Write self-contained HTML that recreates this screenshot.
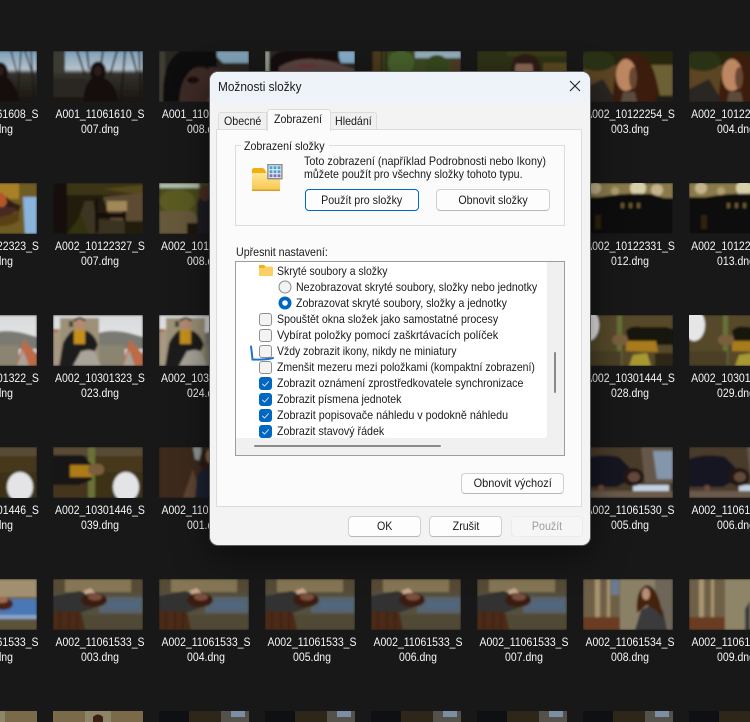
<!DOCTYPE html>
<html><head><meta charset="utf-8"><title>Možnosti složky</title>
<style>
html,body{margin:0;padding:0;background:#181818;width:750px;height:722px;overflow:hidden}
body{position:relative;font-family:"Liberation Sans",sans-serif}
#bg{position:absolute;left:0;top:0;display:block}
#bg text{font:12px "Liberation Sans",sans-serif;fill:#f4f6f8;text-anchor:middle;transform-box:fill-box;transform-origin:center;transform:scaleX(.875)}
.a{position:absolute;box-sizing:border-box}
.t{position:absolute;white-space:nowrap;font-size:12px;line-height:16px;color:#1a1a1a;transform-origin:left center;transform:scaleX(.888)}
.b{position:absolute;box-sizing:border-box;background:#fdfdfd;border:1px solid #d0d0d0;border-bottom-color:#b8b8b8;border-radius:4px;text-align:center;font-size:12px;color:#1a1a1a}
.b span{display:inline-block;transform:scaleX(.888)}
.c{position:absolute;left:259px;width:13px;height:13px;box-sizing:border-box;border:1px solid #8f8f8f;border-radius:3px;background:#f3f3f3}
.k{position:absolute;left:259px;width:13px;height:13px;border-radius:3px;background:#0067c0}
.k svg{position:absolute;left:0;top:0}
</style></head><body>
<svg id="bg" width="750" height="722" viewBox="0 0 750 722" xmlns="http://www.w3.org/2000/svg">
<defs>
<filter id="f" x="-5%" y="-5%" width="110%" height="110%"><feGaussianBlur stdDeviation="1"/></filter>
<linearGradient id="sky" x1="0" y1="0" x2="0" y2="1"><stop offset="0" stop-color="#7f9fba"/><stop offset=".36" stop-color="#b4c2cc"/><stop offset=".44" stop-color="#33322c"/><stop offset="1" stop-color="#1a140e"/></linearGradient>
<linearGradient id="grey" x1="0" y1="0" x2="0" y2="1"><stop offset="0" stop-color="#d8dadc"/><stop offset="1" stop-color="#eeeeee"/></linearGradient>
<symbol id="sil" viewBox="0 0 90 51"><g filter="url(#f)"><rect width="90" height="51" fill="url(#sky)"/><path d="M0 0h12v22H0z" fill="#3a3a32"/><path d="M0 28h32v18H0z" fill="#2a2620"/><path d="M24 0l8 24M64 0l-7 24M72 0l-4 51M86 0l2 51M50 0l-2 14M78 0l6 22M34 0l2 18" stroke="#15120e" stroke-width="1.6" fill="none"/><path d="M30 51q2-20 9-24a8 10 0 1 1 12 0q11 4 14 24z" fill="#141010"/><ellipse cx="45" cy="20" rx="4" ry="5" fill="#2a1e18"/></g></symbol>
<symbol id="sil0" viewBox="0 0 90 51"><g filter="url(#f)"><rect width="90" height="51" fill="url(#sky)"/><path d="M74 0l-4 51M84 0l3 51M64 0l6 22M78 0l8 24" stroke="#15120e" stroke-width="1.3" fill="none"/><path d="M34 51q2-20 12-25a8 10 0 1 1 14 0q8 6 13 25z" fill="#141010"/><ellipse cx="53" cy="20" rx="4" ry="5" fill="#2a1e18"/></g></symbol>
<symbol id="face" viewBox="0 0 90 51"><g filter="url(#f)"><rect width="90" height="51" fill="#2a2722"/><path d="M0 0h6v51H0z" fill="#403e32"/><path d="M52 0h38v12H64z" fill="#7f9fb4"/><path d="M4 51Q2 10 22 0h36v16H40Q26 22 22 51z" fill="#0f0c0c"/><path d="M20 51Q22 22 38 16q26 0 52 8v27z" fill="#3e2c28"/><ellipse cx="34" cy="29" rx="6" ry="3.5" fill="#120d0d"/><path d="M36 16q8-2 14 2" stroke="#1a1010" stroke-width="2" fill="none"/><path d="M52 42q18-8 38-6v15H48z" fill="#6a4238"/></g></symbol>
<symbol id="face2" viewBox="0 0 90 51"><g filter="url(#f)"><rect width="90" height="51" fill="#2a2722"/><rect width="4" height="51" fill="#9aa090"/><path d="M72 0h18v12H76z" fill="#84acc8"/><path d="M4 51V10Q10 0 22 0h52v10H30z" fill="#121010"/><path d="M14 51V16q20-12 50-6l26 8v33z" fill="#5a4440"/><path d="M30 8q12-3 22 0" stroke="#1a1010" stroke-width="2" fill="none"/><path d="M34 14q10 3 16-1" stroke="#6a3034" stroke-width="3" fill="none"/></g></symbol>
<symbol id="green" viewBox="0 0 90 51"><g filter="url(#f)"><rect width="90" height="51" fill="#3c4a22"/><path d="M44 0h46v7H44z" fill="#94aebc"/><path d="M0 0h10v21H0z" fill="#4a3a1c"/><path d="M1 0v21M11 0v21M15 0v21" stroke="#2a1c0c" stroke-width="2"/><circle cx="30" cy="12" r="13" fill="#46602a"/><circle cx="66" cy="16" r="12" fill="#36481f"/><path d="M80 8h10v13H80z" fill="#4e3a26"/></g></symbol>
<symbol id="wood" viewBox="0 0 90 51"><g filter="url(#f)"><rect width="90" height="51" fill="#2e3014"/><path d="M30 0h60v5H30z" fill="#3a3c16"/><path d="M66 12h24v10H66z" fill="#5a4c24"/><path d="M34 21q0-16 12-18 12-1 16 8l2 10z" fill="#2e1c14"/><ellipse cx="47" cy="18" rx="9" ry="10" fill="#8e6a56"/><path d="M38 10q8-6 18 0l-2 3H40z" fill="#2e1c14"/></g></symbol>
<symbol id="sun" viewBox="0 0 90 51"><g filter="url(#f)"><rect width="90" height="51" fill="#5c4423"/><path d="M0 0h90v14H0z" fill="#26280f"/><ellipse cx="14" cy="10" rx="18" ry="10" fill="#2a3014"/><path d="M66 14h24v30H66z" fill="#6c6036"/><path d="M0 51V38l20-10 14 23z" fill="#2c2622"/><path d="M30 51Q30 8 48 2q18 0 24 22 4 14 6 27z" fill="#3a1c0e"/><ellipse cx="43" cy="24" rx="10" ry="16" fill="#bd8762"/><ellipse cx="50" cy="27" rx="4" ry="11" fill="#6a4630"/><path d="M38 51l2-10h12l2 10z" fill="#5c4c3c"/><path d="M74 51h16v-6H72z" fill="#1a1a18"/></g></symbol>
<symbol id="oh" viewBox="0 0 90 51"><g filter="url(#f)"><rect width="90" height="51" fill="#6e5c22"/><path d="M40 0h32v16H44z" fill="#a88028"/><path d="M76 14h14v37H78z" fill="#8bb4dc"/><path d="M40 40q14-10 32-12l2-6q-10-2-14-8-14 6-20 12z" fill="#2e1e14"/><path d="M44 12q14-8 16 8-8 12-18 6z" fill="#b4562a"/><path d="M40 26q14-4 30-1-8 14-30 12z" fill="#4a2c20"/><path d="M40 34q16 2 32-6v10q-14 8-32 4z" fill="#5a4018"/></g></symbol>
<symbol id="bench" viewBox="0 0 90 51"><g filter="url(#f)"><rect width="90" height="51" fill="#241e0e"/><path d="M13 0h77v12H13z" fill="#3a3412"/><path d="M50 6l40-4v10z" fill="#54481a"/><path d="M50 14l40-4v28H58z" fill="#5c4c30"/><path d="M20 51L32 18h8l6 33z" fill="#3e3620"/><rect width="14" height="51" fill="#17100a"/><path d="M54 18h20v10H54z" fill="#a08858"/><path d="M42 16l3 0v34h-3zM70 28h3v22h-3zM43 30h30v5H43z" fill="#17100a"/><path d="M14 51h22L28 32z" fill="#33320f"/><path d="M46 36l26 2v13H46z" fill="#3a3020"/></g></symbol>
<symbol id="forest" viewBox="0 0 90 51"><g filter="url(#f)"><rect width="90" height="51" fill="#4a4a1e"/><rect width="40" height="5" fill="#b0bca8"/><ellipse cx="18" cy="18" rx="18" ry="12" fill="#5a5a20"/><path d="M0 28h34l14 23H0z" fill="#66593a"/><path d="M28 40h12v11H28z" fill="#1e1710"/><path d="M38 51V22q4-18 14-20v49z" fill="#1c1f22"/><ellipse cx="46" cy="10" rx="6" ry="8" fill="#4a2e22"/></g></symbol>
<symbol id="dark" viewBox="0 0 90 51"><g filter="url(#f)"><rect width="90" height="51" fill="#0e0c09"/><path d="M0 0h90v15L0 14z" fill="#8a7a4c"/><circle cx="55" cy="5" r="8" fill="#d8d0aa"/><circle cx="74" cy="7" r="6" fill="#c4b48c"/><circle cx="12" cy="5" r="6" fill="#c4b48c"/><circle cx="32" cy="8" r="4" fill="#b0a070"/><path d="M4 17q30-8 65-6l21 7v33H0V18z" fill="#0f0d0a"/><path d="M38 20h3v5h-3zM46 20h3v5h-3zM54 20h3v5h-3z" fill="#6a5a30"/><path d="M12 32h6v14h-6z" fill="#2e2010"/></g></symbol>
<symbol id="castle" viewBox="0 0 90 51"><g filter="url(#f)"><rect width="90" height="51" fill="url(#grey)"/><path d="M46 18q12-4 30 0l14 4v12H46z" fill="#7a7a72"/><path d="M46 51V30h26v21z" fill="#8a8470"/><path d="M69 51l8-26 13 14v12z" fill="#bc6a46"/><path d="M70 51l6-16 6 16z" fill="#a8a49a"/><path d="M7 3h39v48H7z" fill="#9c9178"/><path d="M0 14h7v37H0z" fill="#a89882"/><path d="M0 14h5v3H0z" fill="#b06a4a"/><rect x="16" y="6" width="4" height="6" fill="#4a4030"/><path d="M6 51L10 28Q15 18 22 14L34 16Q42 20 45 30L42 36L28 36L20 51z" fill="#1c1b1e"/><path d="M20 51l8-14q8-4 14 0l6 14z" fill="#a8a49a"/><rect x="21" y="14" width="11" height="15" fill="#c4901a"/><ellipse cx="27" cy="9" rx="5" ry="6" fill="#b48a70"/><path d="M21 6q6-6 11 0" stroke="#3a2818" stroke-width="2" fill="none"/></g></symbol>
<symbol id="rot" viewBox="0 0 90 51"><g filter="url(#f)"><rect width="90" height="51" fill="#3e3018"/><rect width="90" height="9" fill="#5a4c34"/><path d="M42 9h48v16H42z" fill="#46381e"/><ellipse cx="73" cy="40" rx="13" ry="15" fill="#e4e4e6"/><rect x="35" y="0" width="7" height="51" fill="#6a7238"/><path d="M0 8h30l9 10v15l-14 5H0z" fill="#141216"/><path d="M17 18h22v12H17z" fill="#ad7c16"/><rect x="35" y="17" width="16" height="11" rx="5" fill="#7a5e3e"/><path d="M0 38h34v13H0z" fill="#44361e"/></g></symbol>
<symbol id="rot2" viewBox="0 0 90 51"><g filter="url(#f)"><rect width="90" height="51" fill="#56482a"/><ellipse cx="5" cy="10" rx="11" ry="16" fill="#e6e6e6"/><rect x="34" y="0" width="5" height="51" fill="#687038"/><path d="M43 16q4-6 16-4l24 0 7 2v16H60l-14-2z" fill="#151210"/><path d="M43 26h30l2 11-32-1z" fill="#a87c1a"/><rect x="29" y="20" width="16" height="10" rx="5" fill="#7a5e3e"/><path d="M50 40l14-2 4 13H46z" fill="#a89830"/><path d="M0 36h38v15H0z" fill="#4c4028"/><path d="M72 38h18v13H72z" fill="#2e2618"/></g></symbol>
<symbol id="brown" viewBox="0 0 90 51"><g filter="url(#f)"><rect width="90" height="51" fill="#3c2b1d"/><path d="M24 51L34 22l8 29z" fill="#5e4432"/><path d="M34 0h8v14l-6-2z" fill="#909a94"/><path d="M36 51l2-20 6-12h12l2 32z" fill="#1a2230"/><path d="M40 18q0-16 10-16 8 4 8 14-10 12-18 2z" fill="#2e1a12"/><ellipse cx="51" cy="9" rx="4" ry="7" fill="#8e6a50"/></g></symbol>
<symbol id="rdark" viewBox="0 0 90 51"><g filter="url(#f)"><rect width="90" height="51" fill="#4a3a2a"/><path d="M58 0h32v36H62z" fill="#66584a"/><path d="M70 4h20v28H74z" fill="#8496ac"/><path d="M50 38h36v6H50z" fill="#c4d2e0"/><path d="M0 12q16-6 36-2l10 10 2 12-14 8H0z" fill="#171820"/><ellipse cx="50" cy="30" rx="11" ry="9" fill="#241612"/><ellipse cx="51" cy="30" rx="6" ry="5" fill="#64483a"/><path d="M0 44h90v7H0z" fill="#6a5a4c"/><circle cx="18" cy="41" r="3" fill="#6e4c3c"/></g></symbol>
<symbol id="lie" viewBox="0 0 90 51"><g filter="url(#f)"><rect width="90" height="51" fill="#55503e"/><rect width="90" height="13" fill="#857654"/><path d="M0 0h12v13H0zM78 0h12v13H78z" fill="#574c34"/><path d="M46 18h44v16H46z" fill="#566470"/><path d="M56 24l30 0v5H56z" fill="#506884"/><path d="M28 36h62v15H28z" fill="#504a34"/><path d="M0 32h28l4 19H0z" fill="#4c2a18"/><path d="M7 32v19M16 32v19M24 32v19" stroke="#2a1a10"/><path d="M0 17l26-5 14 4 4 12-14 5-30-1z" fill="#323232"/><path d="M30 12l8-3 4 5-8 3z" fill="#c8a88c"/><ellipse cx="41" cy="21" rx="13" ry="7" fill="#3a1c10"/><ellipse cx="42" cy="18" rx="7" ry="3.5" fill="#7a5040"/></g></symbol>
<symbol id="lie0" viewBox="0 0 90 51"><g filter="url(#f)"><rect width="90" height="51" fill="#6a6048"/><rect width="90" height="18" fill="#a09070"/><path d="M40 20h50v20H40z" fill="#4a78b4"/><path d="M46 36h44v4H46z" fill="#8aa4c8"/><path d="M40 40h50v11H40z" fill="#5c523a"/><ellipse cx="56" cy="25" rx="10" ry="6" fill="#4a2012"/><ellipse cx="55" cy="21" rx="6" ry="3" fill="#a06a50"/></g></symbol>
<symbol id="tree" viewBox="0 0 90 51"><g filter="url(#f)"><rect width="90" height="51" fill="#8a8066"/><path d="M0 0h37v38H0z" fill="#6e5e46"/><path d="M12 0h5v38h-5zM24 0h3v38h-3z" fill="#a8946e"/><path d="M28 0h8v16h-8z" fill="#6a7c90"/><path d="M0 38h37v13H0z" fill="#6a3e20"/><path d="M72 0h18v51H72z" fill="#6e6656"/><path d="M52 51l6-20 10-5 12 5 4 20z" fill="#3a3a3c"/><path d="M54 34q-2-24 10-28 12 2 16 34l-6-8-10-6z" fill="#45220f"/><ellipse cx="63" cy="15" rx="4" ry="6" fill="#b88e74"/></g></symbol>
<symbol id="tree2" viewBox="0 0 90 51"><g filter="url(#f)"><rect width="90" height="51" fill="#6a5a40"/><path d="M0 0h36v38H0z" fill="#6e5e46"/><path d="M10 0h5v38h-5zM22 0h3v38h-3z" fill="#a89470"/><path d="M0 38h36v13H0z" fill="#6a3e20"/><rect x="36" width="34" height="51" fill="#8e8468"/><path d="M56 51V30l5-8v29z" fill="#3a3a3c"/></g></symbol>
<symbol id="d6" viewBox="0 0 90 11"><rect width="90" height="11" fill="#2e2618"/><path d="M0 0h30v11H0z" fill="#0f1014"/><path d="M62 0h28v11H62z" fill="#54504a"/><path d="M72 0h14v6H72z" fill="#7c8ea4"/></symbol>
<symbol id="t6" viewBox="0 0 90 11"><rect width="90" height="11" fill="#7a6a4a"/><rect x="32" width="26" height="11" fill="#8e8468"/><path d="M40 6q5-5 10 0v5H40z" fill="#3a2010"/></symbol>
</defs>

<use href="#sil0" x="-53" y="51" width="90" height="51"/><use href="#sil" x="53" y="51" width="90" height="51"/><use href="#face" x="159" y="51" width="90" height="51"/><use href="#face2" x="265" y="51" width="90" height="51"/><use href="#green" x="371" y="51" width="90" height="51"/><use href="#wood" x="477" y="51" width="90" height="51"/><use href="#sun" x="583" y="51" width="90" height="51"/><use href="#sun" x="689" y="51" width="90" height="51"/>
<use href="#oh" x="-53" y="183" width="90" height="51"/><use href="#bench" x="53" y="183" width="90" height="51"/><use href="#forest" x="159" y="183" width="90" height="51"/><use href="#dark" x="583" y="183" width="90" height="51"/><use href="#dark" x="689" y="183" width="90" height="51"/>
<use href="#castle" x="-53" y="315" width="90" height="51"/><use href="#castle" x="53" y="315" width="90" height="51"/><use href="#castle" x="159" y="315" width="90" height="51"/><use href="#rot2" x="583" y="315" width="90" height="51"/><use href="#rot2" x="689" y="315" width="90" height="51"/>
<use href="#rot" x="-53" y="447" width="90" height="51"/><use href="#rot" x="53" y="447" width="90" height="51"/><use href="#brown" x="159" y="447" width="90" height="51"/><use href="#rdark" x="583" y="447" width="90" height="51"/><use href="#rdark" x="689" y="447" width="90" height="51"/>
<use href="#lie0" x="-53" y="579" width="90" height="51"/><use href="#lie" x="53" y="579" width="90" height="51"/><use href="#lie" x="159" y="579" width="90" height="51"/><use href="#lie" x="265" y="579" width="90" height="51"/><use href="#lie" x="371" y="579" width="90" height="51"/><use href="#lie" x="477" y="579" width="90" height="51"/><use href="#tree" x="583" y="579" width="90" height="51"/><use href="#tree2" x="689" y="579" width="90" height="51"/>
<use href="#t6" x="-53" y="711" width="90" height="11"/><use href="#t6" x="53" y="711" width="90" height="11"/><use href="#d6" x="159" y="711" width="90" height="11"/><use href="#d6" x="265" y="711" width="90" height="11"/><use href="#d6" x="371" y="711" width="90" height="11"/><use href="#d6" x="477" y="711" width="90" height="11"/><use href="#d6" x="583" y="711" width="90" height="11"/><use href="#d6" x="689" y="711" width="90" height="11"/>

<text x="-6" y="118">A001_11061608_S</text><text x="-6" y="133">006.dng</text>
<text x="100" y="118">A001_11061610_S</text><text x="100" y="133">007.dng</text>
<text x="206" y="118">A001_11061611_S</text><text x="206" y="133">008.dng</text>
<text x="630" y="118">A002_10122254_S</text><text x="630" y="133">003.dng</text>
<text x="736" y="118">A002_10122255_S</text><text x="736" y="133">004.dng</text>
<text x="-6" y="250">A002_10122323_S</text><text x="-6" y="265">006.dng</text>
<text x="100" y="250">A002_10122327_S</text><text x="100" y="265">007.dng</text>
<text x="206" y="250">A002_10122328_S</text><text x="206" y="265">008.dng</text>
<text x="630" y="250">A002_10122331_S</text><text x="630" y="265">012.dng</text>
<text x="736" y="250">A002_10122331_S</text><text x="736" y="265">013.dng</text>
<text x="-6" y="382">A002_10301322_S</text><text x="-6" y="397">022.dng</text>
<text x="100" y="382">A002_10301323_S</text><text x="100" y="397">023.dng</text>
<text x="206" y="382">A002_10301323_S</text><text x="206" y="397">024.dng</text>
<text x="630" y="382">A002_10301444_S</text><text x="630" y="397">028.dng</text>
<text x="736" y="382">A002_10301444_S</text><text x="736" y="397">029.dng</text>
<text x="-6" y="514">A002_10301446_S</text><text x="-6" y="529">038.dng</text>
<text x="100" y="514">A002_10301446_S</text><text x="100" y="529">039.dng</text>
<text x="206" y="514">A002_11061500_S</text><text x="206" y="529">001.dng</text>
<text x="630" y="514">A002_11061530_S</text><text x="630" y="529">005.dng</text>
<text x="736" y="514">A002_11061530_S</text><text x="736" y="529">006.dng</text>
<text x="-6" y="646">A002_11061533_S</text><text x="-6" y="661">002.dng</text>
<text x="100" y="646">A002_11061533_S</text><text x="100" y="661">003.dng</text>
<text x="206" y="646">A002_11061533_S</text><text x="206" y="661">004.dng</text>
<text x="312" y="646">A002_11061533_S</text><text x="312" y="661">005.dng</text>
<text x="418" y="646">A002_11061533_S</text><text x="418" y="661">006.dng</text>
<text x="524" y="646">A002_11061533_S</text><text x="524" y="661">007.dng</text>
<text x="630" y="646">A002_11061534_S</text><text x="630" y="661">008.dng</text>
<text x="736" y="646">A002_11061534_S</text><text x="736" y="661">009.dng</text>
</svg>

<!-- dialog -->
<div class="a" style="left:210px;top:72px;width:380px;height:473px;background:#f3f3f3;border-radius:8px;box-shadow:0 0 0 1px #5c5c5c,0 10px 34px rgba(0,0,0,.55)"></div>
<div class="a" style="left:210px;top:72px;width:380px;height:30px;background:#eef2f9;border-radius:8px 8px 0 0"></div>
<div class="t" style="left:218px;top:79px;font-size:13px;transform:scaleX(.91)">Možnosti složky</div>
<svg class="a" style="left:569px;top:80px" width="12" height="12" viewBox="0 0 12 12"><path d="M1 1l10 10M11 1L1 11" stroke="#222" stroke-width="1.1" fill="none"/></svg>

<!-- tabs -->
<div class="a" style="left:218px;top:112px;width:49px;height:18px;background:#f0f0f0;border:1px solid #dcdcdc;border-bottom:0;border-radius:3px 0 0 0"></div>
<div class="a" style="left:330px;top:112px;width:47px;height:18px;background:#f0f0f0;border:1px solid #dcdcdc;border-bottom:0;border-left:0;border-radius:0 3px 0 0"></div>
<div class="a" style="left:216px;top:129px;width:366px;height:378px;background:#fbfbfb;border:1px solid #dcdcdc"></div>
<div class="a" style="left:267px;top:109px;width:64px;height:22px;background:#fbfbfb;border:1px solid #dcdcdc;border-bottom:0;border-radius:3px 3px 0 0"></div>
<div class="t" style="left:223.5px;top:113px">Obecné</div>
<div class="t" style="left:274px;top:111px">Zobrazení</div>
<div class="t" style="left:335px;top:113px">Hledání</div>

<!-- group -->
<div class="a" style="left:235px;top:145px;width:330px;height:81px;border:1px solid #dcdcdc"></div>
<div class="a" style="left:241px;top:140px;width:88px;height:12px;background:#fbfbfb"></div>
<div class="t" style="left:244px;top:138px">Zobrazení složky</div>
<svg class="a" style="left:250px;top:162px" width="36" height="32" viewBox="0 0 36 32">
<defs><linearGradient id="fo" x1="0" y1="0" x2="0" y2="1"><stop offset="0" stop-color="#ffe79a"/><stop offset="1" stop-color="#f7c648"/></linearGradient></defs>
<path d="M2 8q0-2 2-2h8q2 0 3 2l2 4H2z" fill="#f2b010"/>
<rect x="2" y="11" width="28" height="18" rx="1" fill="url(#fo)"/><rect x="2" y="27.5" width="28" height="1.5" fill="#d6a030"/>
<rect x="17.9" y="2.7" width="14" height="14" fill="#f4f4f4" stroke="#8a8a8a" stroke-width="1.4"/>
<path d="M19.5 4.3h3v3h-3zM23.5 4.3h3v3h-3zM27.5 4.3h3v3h-3z" fill="#3fa6d8"/><path d="M19.5 8.3h3v3h-3zM23.5 8.3h3v3h-3zM27.5 8.3h3v3h-3z" fill="#5c9cc8"/><path d="M19.5 12.3h3v3h-3zM23.5 12.3h3v3h-3zM27.5 12.3h3v3h-3z" fill="#6f78b8"/>
</svg>
<div class="t" style="left:304px;top:153px;transform:scaleX(.9)">Toto zobrazení (například Podrobnosti nebo Ikony)</div>
<div class="t" style="left:304px;top:166px">můžete použít pro všechny složky tohoto typu.</div>
<div class="b" style="left:305px;top:189px;width:114px;height:22px;line-height:20px;border:1.5px solid #0067c0"><span>Použít pro složky</span></div>
<div class="b" style="left:436px;top:189px;width:114px;height:22px;line-height:20px"><span>Obnovit složky</span></div>

<div class="t" style="left:236px;top:244px">Upřesnit nastavení:</div>

<!-- list -->
<div class="a" style="left:235px;top:261px;width:330px;height:195px;background:#f0f0f0;border:1px solid #9c9c9c"></div>
<div class="a" style="left:236px;top:262px;width:311px;height:176px;background:#fff;border-radius:0 0 3px 0"></div>
<div class="a" style="left:554px;top:352px;width:2px;height:41px;background:#8a8a8a;border-radius:1px"></div>
<div class="a" style="left:254px;top:445px;width:187px;height:2px;background:#8a8a8a;border-radius:1px"></div>

<svg class="a" style="left:259px;top:265px" width="14" height="11" viewBox="0 0 14 11"><path d="M0 1q0-1 1-1h4l1.5 1.5H13q1 0 1 1V10q0 1-1 1H1q-1 0-1-1z" fill="#fbcf62"/><path d="M0 1q0-1 1-1h4l1.5 1.5L5 3H0z" fill="#eeb020"/></svg>
<div class="t" style="left:277px;top:263px;transform:scaleX(.872)">Skryté soubory a složky</div>
<svg class="a" style="left:278px;top:280px" width="14" height="14" viewBox="0 0 14 14"><circle cx="7" cy="7" r="6" fill="#f3f3f3" stroke="#8a8a8a"/></svg>
<div class="t" style="left:296px;top:279px;transform:scaleX(.885)">Nezobrazovat skryté soubory, složky nebo jednotky</div>
<svg class="a" style="left:278px;top:296px" width="14" height="14" viewBox="0 0 14 14"><circle cx="7" cy="7" r="6.5" fill="#0067c0"/><circle cx="7" cy="7" r="2.8" fill="#fff"/></svg>
<div class="t" style="left:296px;top:295px;transform:scaleX(.884)">Zobrazovat skryté soubory, složky a jednotky</div>

<div class="c" style="top:313px"></div><div class="t" style="left:277px;top:311px;transform:scaleX(.884)">Spouštět okna složek jako samostatné procesy</div>
<div class="c" style="top:329px"></div><div class="t" style="left:277px;top:327px;transform:scaleX(.913)">Vybírat položky pomocí zaškrtávacích políček</div>
<div class="c" style="top:345px"></div><div class="t" style="left:277px;top:343px;transform:scaleX(.872)">Vždy zobrazit ikony, nikdy ne miniatury</div>
<div class="c" style="top:361px"></div><div class="t" style="left:277px;top:359px;transform:scaleX(.875)">Zmenšit mezeru mezi položkami (kompaktní zobrazení)</div>
<div class="k" style="top:377px"><svg width="13" height="13" viewBox="0 0 13 13"><path d="M3.3 6.8l2.2 2.2 4.3-4.6" stroke="#dfeaf6" stroke-width=".9" fill="none"/></svg></div><div class="t" style="left:277px;top:375px">Zobrazit oznámení zprostředkovatele synchronizace</div>
<div class="k" style="top:393px"><svg width="13" height="13" viewBox="0 0 13 13"><path d="M3.3 6.8l2.2 2.2 4.3-4.6" stroke="#dfeaf6" stroke-width=".9" fill="none"/></svg></div><div class="t" style="left:277px;top:391px;transform:scaleX(.88)">Zobrazit písmena jednotek</div>
<div class="k" style="top:409px"><svg width="13" height="13" viewBox="0 0 13 13"><path d="M3.3 6.8l2.2 2.2 4.3-4.6" stroke="#dfeaf6" stroke-width=".9" fill="none"/></svg></div><div class="t" style="left:277px;top:407px;transform:scaleX(.895)">Zobrazit popisovače náhledu v podokně náhledu</div>
<div class="k" style="top:425px"><svg width="13" height="13" viewBox="0 0 13 13"><path d="M3.3 6.8l2.2 2.2 4.3-4.6" stroke="#dfeaf6" stroke-width=".9" fill="none"/></svg></div><div class="t" style="left:277px;top:423px">Zobrazit stavový řádek</div>

<svg class="a" style="left:245px;top:343px" width="32" height="20" viewBox="0 0 32 20"><path d="M6 3.5q1 7 1.5 13q13 .5 20.5-1.5" stroke="#1f74c8" stroke-width="2" fill="none" stroke-linecap="round"/></svg>

<div class="b" style="left:461px;top:473px;width:103px;height:21px;line-height:19px"><span style="transform:scaleX(.915)">Obnovit výchozí</span></div>
<div class="b" style="left:348px;top:516px;width:73px;height:21px;line-height:19px"><span>OK</span></div>
<div class="b" style="left:429px;top:516px;width:73px;height:21px;line-height:19px"><span>Zrušit</span></div>
<div class="b" style="left:511px;top:516px;width:72px;height:21px;line-height:19px;background:#f6f6f6;border-color:#ececec;color:#9c9c9c"><span>Použít</span></div>
</body></html>
